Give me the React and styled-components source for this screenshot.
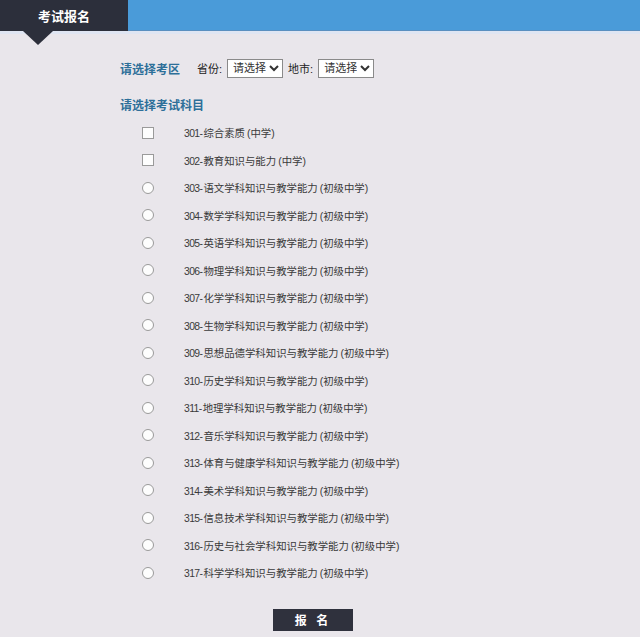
import styled, {createGlobalStyle} from "styled-components";

const GlobalStyle = createGlobalStyle`
  html, body { margin:0; padding:0; background:#e9e6eb; }
  body { font-family:"Liberation Sans","Noto Sans CJK SC",sans-serif; }
`;

const subjects = [
  {code:"301", name:"综合素质", level:"中学", type:"checkbox"},
  {code:"302", name:"教育知识与能力", level:"中学", type:"checkbox"},
  {code:"303", name:"语文学科知识与教学能力", level:"初级中学", type:"radio"},
  {code:"304", name:"数学学科知识与教学能力", level:"初级中学", type:"radio"},
  {code:"305", name:"英语学科知识与教学能力", level:"初级中学", type:"radio"},
  {code:"306", name:"物理学科知识与教学能力", level:"初级中学", type:"radio"},
  {code:"307", name:"化学学科知识与教学能力", level:"初级中学", type:"radio"},
  {code:"308", name:"生物学科知识与教学能力", level:"初级中学", type:"radio"},
  {code:"309", name:"思想品德学科知识与教学能力", level:"初级中学", type:"radio"},
  {code:"310", name:"历史学科知识与教学能力", level:"初级中学", type:"radio"},
  {code:"311", name:"地理学科知识与教学能力", level:"初级中学", type:"radio"},
  {code:"312", name:"音乐学科知识与教学能力", level:"初级中学", type:"radio"},
  {code:"313", name:"体育与健康学科知识与教学能力", level:"初级中学", type:"radio"},
  {code:"314", name:"美术学科知识与教学能力", level:"初级中学", type:"radio"},
  {code:"315", name:"信息技术学科知识与教学能力", level:"初级中学", type:"radio"},
  {code:"316", name:"历史与社会学科知识与教学能力", level:"初级中学", type:"radio"},
  {code:"317", name:"科学学科知识与教学能力", level:"初级中学", type:"radio"},
];

function App() {
  return (
    <Page>
      <GlobalStyle/>
      <Header>
        <Tab>考试报名</Tab>
        <HeaderFill/>
      </Header>
      <Strip/>
      <Content>
        <RegionRow>
          <SectionTitle>请选择考区</SectionTitle>
          <Label>省份:</Label>
          <Select defaultValue="">
            <option value="">请选择</option>
          </Select>
          <Label>地市:</Label>
          <Select defaultValue="">
            <option value="">请选择</option>
          </Select>
        </RegionRow>
        <SubjectTitle>请选择考试科目</SubjectTitle>
        <List>
          {subjects.map((s)=>(
            <Row key={s.code}>
              <Box type={s.type} name="subject"/>
              <Text><Code>{s.code}-</Code>{s.name}<Paren>({s.level})</Paren></Text>
            </Row>
          ))}
        </List>
        <Footer>
          <Button>报&nbsp;名</Button>
        </Footer>
      </Content>
    </Page>
  )
}

const Page = styled.div`
width:640px;
height:637px;
overflow:hidden;
background:#e9e6eb;
`

const Header = styled.div`
display:flex;
height:31px;
`

const Tab = styled.div`
position:relative;
width:128px;
background:#2c2f3b;
color:#fff;
font-size:13px;
font-weight:bold;
display:flex;
align-items:center;
padding-left:38px;
box-sizing:border-box;
&::after{
  content:"";
  position:absolute;
  left:23px;
  top:31px;
  border-left:15px solid transparent;
  border-right:15px solid transparent;
  border-top:14px solid #2c2f3b;
}
`

const HeaderFill = styled.div`
flex:1;
background:#4a9bd9;
border-bottom:1px solid #5a8fbf;
`

const Strip = styled.div`
height:3px;
background:#dfe5f2;
`

const Content = styled.div`
padding:24px 0 0 120px;
`

const RegionRow = styled.div`
display:flex;
align-items:center;
height:20px;
`

const SectionTitle = styled.div`
color:#2d6f99;
font-size:12px;
font-weight:bold;
margin-right:17px;
`

const SubjectTitle = styled(SectionTitle)`
margin-top:18px;
`

const Label = styled.span`
font-size:11px;
color:#222;
margin-right:5px;
`

const Select = styled.select`
width:56px;
height:19px;
font-size:11px;
font-family:"Liberation Sans","Noto Sans CJK SC",sans-serif;
border:1px solid #8a8a8a;
background:#fff;
color:#333;
padding:0 0 0 1px;
margin-right:5px;
border-radius:0;
`

const List = styled.div`
display:flex;
flex-direction:column;
margin-top:6px;
`

const Row = styled.label`
display:flex;
align-items:center;
height:27.5px;
padding-left:22px;
`

const Box = styled.input`
appearance:none;
margin:0 30px 0 0;
width:12px;
height:12px;
background:#fdfdfd;
border:1px solid #9a9a9a;
border-radius:${p=>p.type==="radio" ? "50%" : "0"};
box-sizing:border-box;
`

const Text = styled.span`
font-size:10.4px;
color:#3a3a3a;
`

const Code = styled.span`
letter-spacing:-0.6px;
margin-right:1px;
`

const Paren = styled.span`
margin-left:2px;
`

const Footer = styled.div`
display:flex;
padding-left:153px;
margin-top:22px;
`

const Button = styled.div`
width:80px;
height:22px;
background:#2f313d;
color:#fff;
font-size:12px;
font-weight:bold;
display:flex;
align-items:center;
justify-content:center;
letter-spacing:3px;
`

export default App;
